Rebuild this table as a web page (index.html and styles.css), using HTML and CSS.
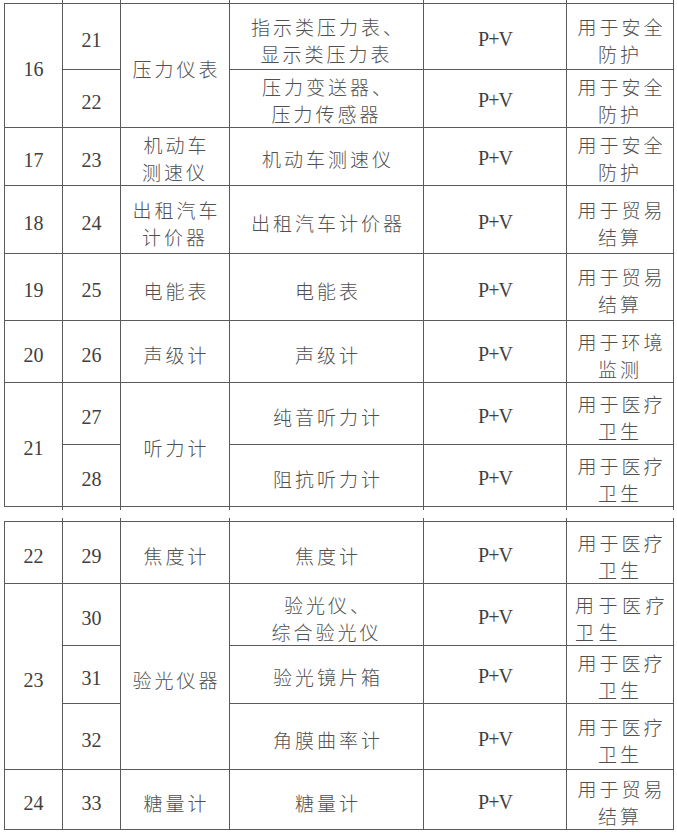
FILE: index.html
```html
<!DOCTYPE html>
<html lang="zh-CN">
<head>
<meta charset="utf-8">
<title>计量器具目录</title>
<link rel="stylesheet" href="styles.css">
</head>
<body>
<table class="grid">
  <colgroup><col class="c1"><col class="c2"><col class="c3"><col class="c4"><col class="c5"><col class="c6"></colgroup>
  <tr class="stub top"><td></td><td></td><td></td><td></td><td></td><td></td></tr>
  <tr class="h66"><td class="num" rowspan="2">16</td><td class="num">21</td><td class="cn" rowspan="2">压力仪表</td><td class="cn">指示类压力表、<br>显示类压力表</td><td class="pv">P+V</td><td class="cn">用于安全<br>防护</td></tr>
  <tr class="h58"><td class="num">22</td><td class="cn">压力变送器、<br>压力传感器</td><td class="pv">P+V</td><td class="cn">用于安全<br>防护</td></tr>
  <tr class="h58"><td class="num">17</td><td class="num">23</td><td class="cn">机动车<br>测速仪</td><td class="cn">机动车测速仪</td><td class="pv">P+V</td><td class="cn">用于安全<br>防护</td></tr>
  <tr class="h68"><td class="num">18</td><td class="num">24</td><td class="cn">出租汽车<br>计价器</td><td class="cn">出租汽车计价器</td><td class="pv">P+V</td><td class="cn">用于贸易<br>结算</td></tr>
  <tr class="h67"><td class="num">19</td><td class="num">25</td><td class="cn">电能表</td><td class="cn">电能表</td><td class="pv">P+V</td><td class="cn">用于贸易<br>结算</td></tr>
  <tr class="h62"><td class="num">20</td><td class="num">26</td><td class="cn">声级计</td><td class="cn">声级计</td><td class="pv">P+V</td><td class="cn">用于环境<br>监测</td></tr>
  <tr class="h62"><td class="num" rowspan="2">21</td><td class="num">27</td><td class="cn" rowspan="2">听力计</td><td class="cn">纯音听力计</td><td class="pv">P+V</td><td class="cn">用于医疗<br>卫生</td></tr>
  <tr class="h62"><td class="num">28</td><td class="cn">阻抗听力计</td><td class="pv">P+V</td><td class="cn">用于医疗<br>卫生</td></tr>
  <tr class="stub bottom"><td></td><td></td><td></td><td></td><td></td><td></td></tr>
</table>
<table class="grid second">
  <colgroup><col class="c1"><col class="c2"><col class="c3"><col class="c4"><col class="c5"><col class="c6"></colgroup>
  <tr class="stub top"><td></td><td></td><td></td><td></td><td></td><td></td></tr>
  <tr class="h62"><td class="num">22</td><td class="num">29</td><td class="cn">焦度计</td><td class="cn">焦度计</td><td class="pv">P+V</td><td class="cn">用于医疗<br>卫生</td></tr>
  <tr class="h62"><td class="num" rowspan="3">23</td><td class="num">30</td><td class="cn" rowspan="3">验光仪器</td><td class="cn">验光仪、<br>综合验光仪</td><td class="pv">P+V</td><td class="cn left">用于医疗<br>卫生</td></tr>
  <tr class="h58"><td class="num">31</td><td class="cn">验光镜片箱</td><td class="pv">P+V</td><td class="cn">用于医疗<br>卫生</td></tr>
  <tr class="h66"><td class="num">32</td><td class="cn">角膜曲率计</td><td class="pv">P+V</td><td class="cn">用于医疗<br>卫生</td></tr>
  <tr class="h60"><td class="num">24</td><td class="num">33</td><td class="cn">糖量计</td><td class="cn">糖量计</td><td class="pv">P+V</td><td class="cn">用于贸易<br>结算</td></tr>
</table>
</body>
</html>
```
FILE: styles.css
```css
html, body {
  margin: 0;
  padding: 0;
  background: #ffffff;
}

body {
  font-family: "Liberation Serif", "Noto Sans CJK SC", serif;
  color: #404040;
}

.grid {
  border-collapse: collapse;
  table-layout: fixed;
  width: 669px;
  margin-left: 4px;
}

.second {
  margin-top: 8px;
}

.c1 { width: 58px; }
.c2 { width: 58px; }
.c3 { width: 109px; }
.c4 { width: 194px; }
.c5 { width: 143px; }
.c6 { width: 107px; }

.grid td {
  border: 1px solid #5a5a5a;
  padding: 6px 0 0 0;
  text-align: center;
  vertical-align: middle;
  line-height: 27px;
}

.grid .stub td {
  height: 3px;
  padding: 0;
  line-height: 0;
  font-size: 0;
}

.grid .stub.top td { border-top: none; }
.grid .stub.bottom td { border-bottom: none; }
.grid .stub td:first-child { border-left: none; }

.grid .h58 td { padding-top: 3px; }
.grid .h60 td { padding-top: 5px; }

.h58 td { height: 50px; }
.h60 td { height: 52px; }
.h62 td { height: 54px; }
.h66 td { height: 58px; }
.h67 td { height: 59px; }
.h68 td { height: 60px; }

.grid td.num {
  font-size: 20px;
  padding-top: 7px;
}

.pv {
  font-size: 20px;
  letter-spacing: -1px;
}

.cn {
  font-family: "Noto Sans CJK SC", sans-serif;
  font-weight: 300;
  font-size: 19px;
  letter-spacing: 3px;
  text-indent: 3px;
  color: #505050;
}

.grid td.left {
  text-align: left;
  padding-left: 8px;
  text-indent: 0;
  letter-spacing: 4.5px;
}
```
